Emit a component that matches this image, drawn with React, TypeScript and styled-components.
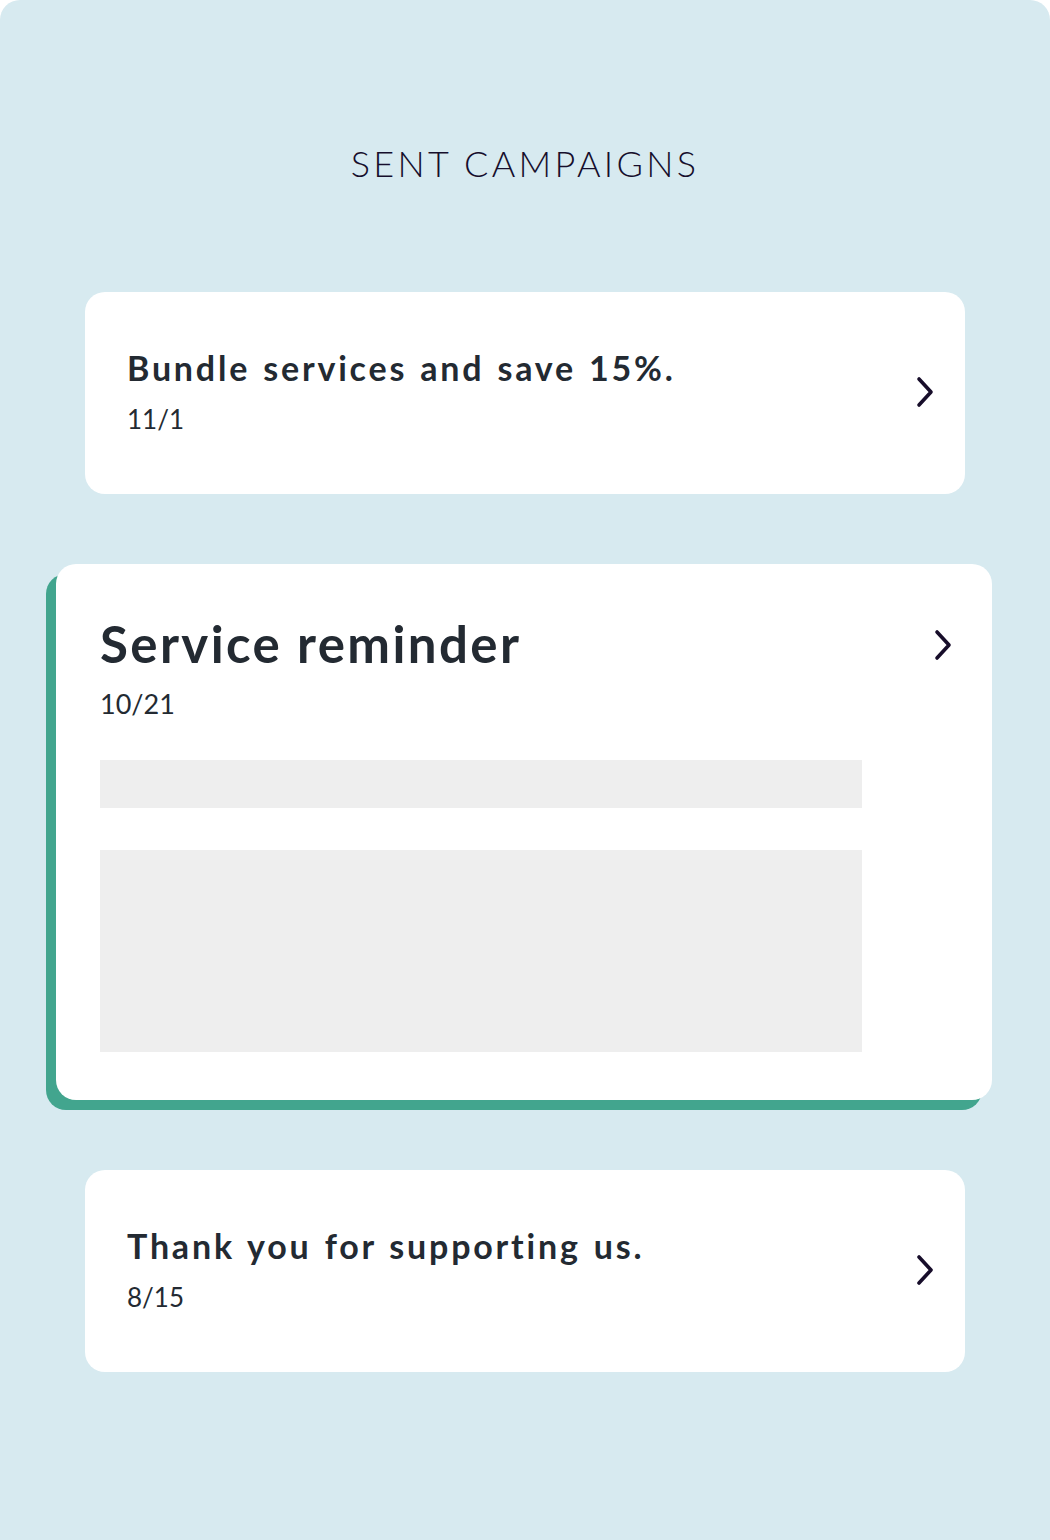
import React from "react";
import styled, { createGlobalStyle } from "styled-components";

const Global = createGlobalStyle`
  html, body { margin: 0; padding: 0; background: #ffffff; }
  body { font-family: Lato, "Noto Sans", sans-serif; }
`;

const Page = styled.div`
  width: 1050px;
  height: 1540px;
  box-sizing: border-box;
  background: #d7eaf0;
  border-radius: 20px 20px 0 0;
  padding-top: 140px;
  display: flex;
  flex-direction: column;
  align-items: center;
`;

const Heading = styled.h1`
  margin: 0 0 106px 0;
  font-family: Lato, sans-serif;
  font-weight: 300;
  font-size: 36px;
  line-height: 46px;
  letter-spacing: 3.3px;
  color: #160e2c;
  text-transform: uppercase;
`;

const List = styled.div`
  display: flex;
  flex-direction: column;
  align-items: center;
  gap: 70px;
  width: 100%;
`;

const Card = styled.div<{ $open?: boolean }>`
  box-sizing: border-box;
  background: #ffffff;
  border-radius: 20px;
  display: flex;
  align-items: ${(p) => (p.$open ? "flex-start" : "center")};
  width: ${(p) => (p.$open ? "936px" : "880px")};
  min-height: 202px;
  padding: ${(p) => (p.$open ? "50px 39px 48px 44px" : "0 30px 3px 42px")};
  box-shadow: ${(p) => (p.$open ? "-10px 10px 0 0 #42a58e" : "none")};
  margin-left: ${(p) => (p.$open ? "-2px" : "0")};
`;

const Body = styled.div`
  flex: 1;
  display: flex;
  flex-direction: column;
`;

const Title = styled.div<{ $large?: boolean }>`
  font-weight: 700;
  font-size: ${(p) => (p.$large ? "51px" : "34px")};
  line-height: ${(p) => (p.$large ? "60px" : "40px")};
  color: #232a32;
  letter-spacing: ${(p) => (p.$large ? "2.4px" : "2.8px")};
  word-spacing: ${(p) => (p.$large ? "0" : "2px")};
`;

const DateText = styled.div<{ $large?: boolean }>`
  font-weight: 400;
  font-size: ${(p) => (p.$large ? "27px" : "26px")};
  line-height: 34px;
  margin-top: ${(p) => (p.$large ? "13px" : "14px")};
  color: #232a32;
`;

const Placeholder = styled.div<{ $h: number; $top: number }>`
  width: 762px;
  height: ${(p) => p.$h}px;
  margin-top: ${(p) => p.$top}px;
  background: #eeeeee;
`;

const Chevron = styled.svg<{ $open?: boolean }>`
  flex: none;
  width: 20px;
  height: 32px;
  margin-top: ${(p) => (p.$open ? "15px" : "0")};
`;

const Arrow = ({ open }: { open?: boolean }) => (
  <Chevron $open={open} viewBox="0 0 20 32">
    <path
      d="M4 3 L16 16 L4 29"
      fill="none"
      stroke="#170d2a"
      strokeWidth="3.6"
      strokeLinecap="round"
      strokeLinejoin="round"
    />
  </Chevron>
);

export default function App() {
  return (
    <>
      <Global />
      <Page>
        <Heading>Sent Campaigns</Heading>
        <List>
          <Card>
            <Body>
              <Title>Bundle services and save 15%.</Title>
              <DateText>11/1</DateText>
            </Body>
            <Arrow />
          </Card>
          <Card $open>
            <Body>
              <Title $large>Service reminder</Title>
              <DateText $large>10/21</DateText>
              <Placeholder $h={48} $top={39} />
              <Placeholder $h={202} $top={42} />
            </Body>
            <Arrow open />
          </Card>
          <Card>
            <Body>
              <Title>Thank you for supporting us.</Title>
              <DateText>8/15</DateText>
            </Body>
            <Arrow />
          </Card>
        </List>
      </Page>
    </>
  );
}
